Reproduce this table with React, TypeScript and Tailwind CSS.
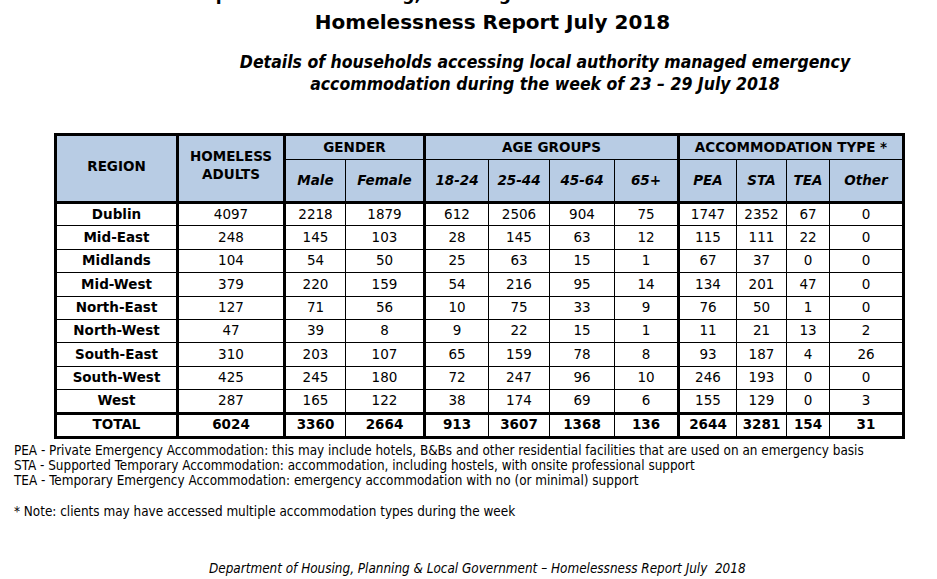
const rows: (string | number)[][] = [
  ['Dublin', 4097, 2218, 1879, 612, 2506, 904, 75, 1747, 2352, 67, 0],
  ['Mid-East', 248, 145, 103, 28, 145, 63, 12, 115, 111, 22, 0],
  ['Midlands', 104, 54, 50, 25, 63, 15, 1, 67, 37, 0, 0],
  ['Mid-West', 379, 220, 159, 54, 216, 95, 14, 134, 201, 47, 0],
  ['North-East', 127, 71, 56, 10, 75, 33, 9, 76, 50, 1, 0],
  ['North-West', 47, 39, 8, 9, 22, 15, 1, 11, 21, 13, 2],
  ['South-East', 310, 203, 107, 65, 159, 78, 8, 93, 187, 4, 26],
  ['South-West', 425, 245, 180, 72, 247, 96, 10, 246, 193, 0, 0],
  ['West', 287, 165, 122, 38, 174, 69, 6, 155, 129, 0, 3],
]
const total = ['TOTAL', 6024, 3360, 2664, 913, 3607, 1368, 136, 2644, 3281, 154, 31]

const widths = [122, 107, 61, 79, 64, 61, 65, 64, 58, 50, 43, 74]
// columns followed by a thick rule
const thickAfter = [0, 1, 3, 7]

const cellBorder = (i: number) =>
  thickAfter.includes(i) ? 'border-r-[3px]' : 'border-r'

export default function App() {
  return (
    <div className="w-[937px] h-[579px] bg-white text-black overflow-hidden font-['DejaVu_Sans',Verdana,sans-serif]">
      {/* cut-off line from the page above */}
      <div className="h-[6px] overflow-hidden">
        <div className="-mt-[16px] pl-[190px] text-[17px] leading-[20px] font-bold whitespace-nowrap">
          Department of Housing, Planning and Local Government
        </div>
      </div>

      <h1 className="mt-[4px] pl-[48px] text-center text-[20px] leading-[24px] font-bold">
        Homelessness Report July 2018
      </h1>

      <div className="mt-[17px] pl-[153px] text-center text-[17.5px] leading-[22px] font-bold italic font-['DejaVu_Sans_Condensed','Liberation_Sans',sans-serif]">
        <p>Details of households accessing local authority managed emergency</p>
        <p>accommodation during the week of 23 – 29 July 2018</p>
      </div>

      <table className="mt-[38px] ml-[54px] table-fixed border-collapse border-[3px] border-black text-[13.5px] leading-none">
        <colgroup>
          {widths.map((w, i) => (
            <col key={i} style={{ width: w }} />
          ))}
        </colgroup>
        <thead className="bg-[#b8cce4] font-bold">
          <tr className="h-[25px]">
            <th rowSpan={2} className="border-r-[3px] border-b-[3px] border-black pb-[3px]">REGION</th>
            <th rowSpan={2} className="border-r-[3px] border-b-[3px] border-black leading-[18px] align-top">
              <div className="pt-[11px]">HOMELESS<br />ADULTS</div>
            </th>
            <th colSpan={2} className="border-r-[3px] border-b border-black">GENDER</th>
            <th colSpan={4} className="border-r-[3px] border-b border-black">AGE GROUPS</th>
            <th colSpan={4} className="border-b border-black">ACCOMMODATION TYPE *</th>
          </tr>
          <tr className="h-[43px] italic">
            {['Male', 'Female', '18-24', '25-44', '45-64', '65+', 'PEA', 'STA', 'TEA', 'Other'].map((h, j) => (
              <th key={h} className={`${cellBorder(j + 2)} border-b-[3px] border-black`}>
                {h}
              </th>
            ))}
          </tr>
        </thead>
        <tbody>
          {rows.map(r => (
            <tr key={r[0]} className="h-[23.4px]">
              {r.map((v, i) => (
                <td key={i} className={`${cellBorder(i)} border-b border-black text-center ${i === 0 ? 'font-bold' : ''}`}>
                  {v}
                </td>
              ))}
            </tr>
          ))}
          <tr className="h-[24px] font-bold">
            {total.map((v, i) => (
              <td key={i} className={`${cellBorder(i)} border-t-[3px] border-black text-center`}>
                {v}
              </td>
            ))}
          </tr>
        </tbody>
      </table>

      <div className="mt-[4px] pl-[14px] text-[13.4px] leading-[15px] font-['DejaVu_Sans_Condensed','Liberation_Sans',sans-serif]">
        <p>PEA - Private Emergency Accommodation: this may include hotels, B&amp;Bs and other residential facilities that are used on an emergency basis</p>
        <p>STA - Supported Temporary Accommodation: accommodation, including hostels, with onsite professional support</p>
        <p>TEA - Temporary Emergency Accommodation: emergency accommodation with no (or minimal) support</p>
        <p className="mt-[16px]">* Note: clients may have accessed multiple accommodation types during the week</p>
      </div>

      <p className="mt-[42px] pl-[209px] text-[13.4px] leading-[15px] italic font-['DejaVu_Sans_Condensed','Liberation_Sans',sans-serif] whitespace-pre">
        Department of Housing, Planning &amp; Local Government – Homelessness Report July  2018
      </p>
    </div>
  )
}
